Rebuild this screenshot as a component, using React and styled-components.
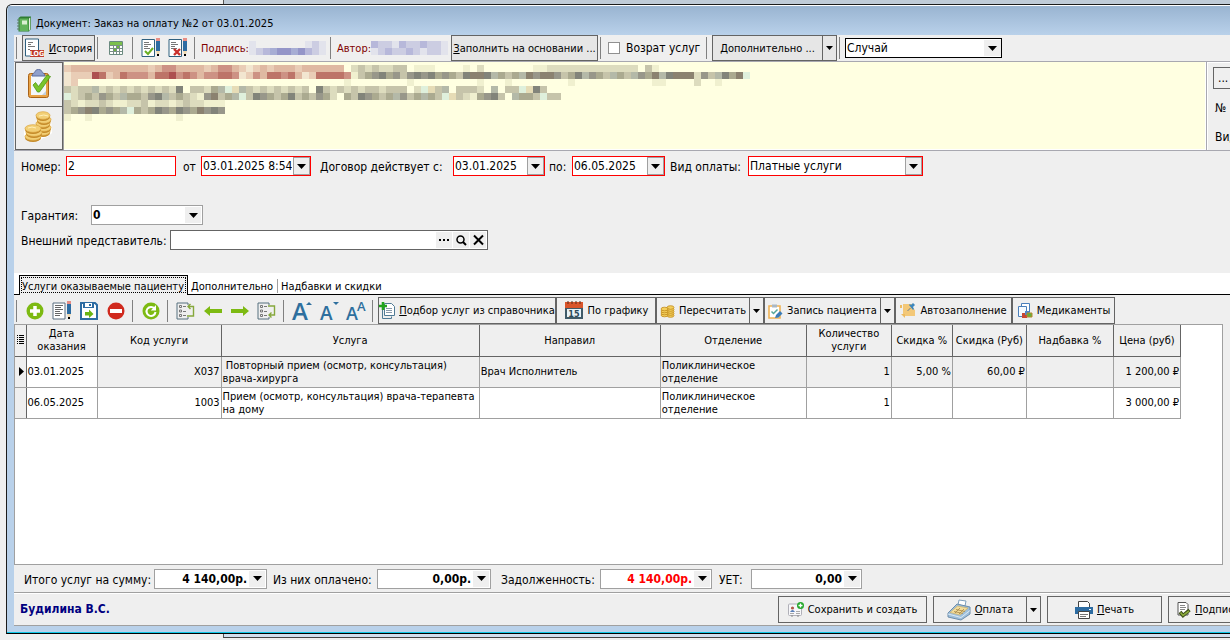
import React from "react";
import styled, { createGlobalStyle, css } from "styled-components";

const line = "#a0a0a0";
const dark = "#646464";

const Global = createGlobalStyle`
  *, *::before, *::after { box-sizing: border-box; }
  body {
    margin: 0;
    background: #efefef;
    color: #000;
    font: 11px/13px "DejaVu Sans Condensed", "Noto Sans", sans-serif;
  }
  button, input, select { font: inherit; color: inherit; margin: 0; border-radius: 0; }
  u { text-underline-offset: 1px; }
`;

/* ---------- window shell ---------- */

const Desktop = styled.div`
  display: flex;
  flex-direction: column;
  min-height: 100vh;
  overflow: hidden;
`;
const BackEdge = styled.div`
  height: 4px;
  margin-left: 223px;
  border-left: 1px solid #555;
  background: ${(p) => (p.$bottom ? "#d3dfee" : "#c0ccd8")};
  ${(p) => p.$bottom && css`border-bottom: 1px solid #444; margin-bottom: 2px;`}
`;
const Window = styled.div`
  flex: 1;
  display: flex;
  flex-direction: column;
  margin: 0 -60px 0 6px;
  border: 1px solid #1c1c1c;
  border-bottom-color: #000;
  border-radius: 6px 6px 0 0;
  background: #b9d1ea;
  box-shadow: inset 0 -1px 0 #10c8e8, inset 0 1px 0 #fff;
  padding: 1px 7px 7px 7px;
  overflow: hidden;
`;
const TitleBar = styled.header`
  display: flex;
  align-items: center;
  gap: 4px;
  height: 29px;
  margin: 0 -6px;
  padding: 6px 0 0 9px;
  background: linear-gradient(#99b4d1, #b9d1ea);
`;
const Title = styled.h1`
  margin: 0;
  font-size: 11px;
  font-weight: 400;
  line-height: 16px;
  white-space: nowrap;
`;
const Client = styled.main`
  flex: 1;
  display: flex;
  flex-direction: column;
  background: #efefef;
  border-bottom: 1px solid ${line};
`;

/* ---------- toolbars ---------- */

const Bar = styled.div`
  display: flex;
  align-items: center;
  height: ${(p) => p.$h}px;
  padding-top: ${(p) => p.$pt || 0}px;
`;
const Sep = styled.span`
  flex: none;
  width: 1px;
  height: 22px;
  margin: 0 5px 0 2px;
  background: #808080;
`;
const IconButton = styled.button`
  flex: none;
  display: flex;
  align-items: center;
  justify-content: center;
  width: 27px;
  height: 26px;
  padding: 0 2px 0 0;
  border: 0;
  background: none;
`;
const PushButton = styled.button`
  flex: none;
  display: flex;
  align-items: center;
  justify-content: ${(p) => p.$justify || "center"};
  gap: 4px;
  width: ${(p) => p.$w}px;
  height: ${(p) => p.$h || 26}px;
  padding: 0 ${(p) => p.$px || 2}px;
  border: 1px solid ${dark};
  background: ${(p) => (p.$raised ? "#e6e6e6" : "#efefef")};
  white-space: nowrap;
`;
const DropButton = styled(PushButton)`
  width: 15px;
  padding: 0;
  margin-left: -1px;
`;
const Signature = styled.div`
  flex: none;
  display: flex;
  align-items: center;
  width: ${(p) => p.$w}px;
  padding-left: 1px;
  color: #800000;
  white-space: nowrap;
`;
const CheckLabel = styled.label`
  flex: none;
  display: flex;
  align-items: center;
  gap: 6px;
  width: 98px;
  padding-left: 2px;
  font-size: 12px;
  white-space: nowrap;
`;
const CheckBox = styled.input`
  appearance: none;
  flex: none;
  width: 12px;
  height: 12px;
  border: 1px solid #909090;
  background: #fff;
`;

/* ---------- fields ---------- */

const Box = styled.span`
  flex: none;
  display: flex;
  align-items: center;
  width: ${(p) => p.$w}px;
  height: 20px;
  border: 1px solid ${(p) => p.$border || line};
  background: #fff;
  overflow: hidden;
`;
const Input = styled.input`
  flex: 1;
  min-width: 0;
  height: 18px;
  padding: 0 ${(p) => (p.$right ? 2 : 1)}px 0 1px;
  border: 0;
  outline: 0;
  background: none;
  font-size: 12px;
  font-weight: ${(p) => (p.$bold ? 700 : 400)};
  text-align: ${(p) => (p.$right ? "right" : "left")};
  color: ${(p) => p.$color || "#000"};
`;
const BoxButton = styled.button`
  flex: none;
  display: flex;
  align-items: center;
  justify-content: center;
  width: ${(p) => (p.$framed ? 17 : 16)}px;
  height: ${(p) => (p.$framed ? 18 : 16)}px;
  margin-right: ${(p) => (p.$framed ? 0 : 1)}px;
  padding: 0;
  border: ${(p) => (p.$framed ? `1px solid ${line}` : 0)};
  background: #efefef;
`;
const SelectWrap = styled(Box)`
  display: grid;
  grid-template-columns: 1fr 17px;
  > * { grid-row: 1; }
  > select { grid-column: 1 / 3; }
  > span { grid-column: 2; }
`;
const Select = styled.select`
  appearance: none;
  height: 18px;
  padding: 0 1px;
  border: 0;
  outline: 0;
  background: none;
  font-size: 12px;
`;
const SelectArrow = styled.span`
  display: flex;
  align-items: center;
  justify-content: center;
  height: ${(p) => (p.$framed ? 18 : 16)}px;
  border: ${(p) => (p.$framed ? `1px solid ${line}` : 0)};
  background: #efefef;
  pointer-events: none;
`;
const Label = styled.label`
  flex: none;
  width: ${(p) => p.$w}px;
  padding: 2px 0 0 ${(p) => p.$pl || 0}px;
  font-size: 12px;
  line-height: 16px;
  white-space: nowrap;
`;

/* ---------- patient panel ---------- */

const Patient = styled.section`
  display: flex;
  height: 90px;
  border-top: 1px solid #a8a8b0;
  border-bottom: 1px solid #a8a8b0;
`;
const SideButtons = styled.div`
  flex: none;
  display: flex;
  flex-direction: column;
  width: 50px;
  padding-left: 1px;
  border-right: 1px solid ${line};
`;
const SideButton = styled.button`
  flex: 1;
  display: flex;
  align-items: center;
  justify-content: center;
  padding: 0;
  border: 1px solid ${dark};
  background: #efefef;
  & + & { margin-top: -1px; }
`;
const Banner = styled.div`
  flex: 1;
  min-width: 0;
  padding-top: 3px;
  border: solid #fff;
  border-width: 0 1px 1px 0;
  background: #ffffe1;
`;
const Extra = styled.div`
  flex: none;
  display: flex;
  flex-direction: column;
  gap: 9px;
  width: 76px;
  padding: 5px 0 0 6px;
  border-left: 1px solid #a8a8b0;
  box-shadow: inset 1px 1px 0 #fff;
  font-size: 12px;
  line-height: 20px;
  > span { padding-left: 2px; }
`;

/* ---------- form, tabs, table ---------- */

const Form = styled.section`
  display: flex;
  flex-direction: column;
  height: 122px;
  padding: 5px 0 0 7px;
`;
const Line = styled.div`
  display: flex;
  align-items: center;
  margin-bottom: ${(p) => p.$mb || 0}px;
`;
const Tabs = styled.nav`
  display: flex;
  align-items: flex-end;
  height: 22px;
  padding-left: 5px;
  background: #fff;
  border-bottom: 1px solid #000;
`;
const Tab = styled.button`
  flex: none;
  height: ${(p) => (p.$active ? 20 : 14)}px;
  width: ${(p) => p.$w}px;
  margin-bottom: ${(p) => (p.$active ? -1 : 1)}px;
  padding: ${(p) => (p.$active ? "2px 2px 0" : "0 3px")};
  border: ${(p) => (p.$active ? "1px solid #000" : 0)};
  border-bottom: 0;
  border-right: ${(p) => (p.$active ? "1px solid #000" : p.$edge ? "1px solid #a0a0a0" : 0)};
  background: ${(p) => (p.$active ? "#efefef" : "#fff")};
  outline: ${(p) => (p.$active ? "1px dotted #000" : 0)};
  outline-offset: -3px;
  text-align: left;
  white-space: nowrap;
`;
const GridArea = styled.section`
  flex: 1;
  margin-right: 59px;
  border: 1px solid ${line};
  background: #fff;
`;
const Table = styled.table`
  table-layout: fixed;
  width: 1166px;
  border-collapse: collapse;
`;
const Th = styled.th`
  height: 31px;
  padding: 0 2px;
  border: 1px solid ${dark};
  border-top: 0;
  background: #efefef;
  font-weight: 400;
  &:first-child { border-left: 0; padding: 0; }
`;
const Td = styled.td`
  height: 31px;
  padding: 0 1px;
  border: 1px solid ${line};
  background: ${(p) => (p.$gray ? "#efefef" : "#fff")};
  text-align: ${(p) => (p.$right ? "right" : "left")};
  white-space: pre-wrap;
  &:first-child { border-left: 0; border-right-color: ${dark}; padding: 0; }
  > svg { display: block; }
`;
const Totals = styled.section`
  display: flex;
  align-items: center;
  height: 28px;
  padding-left: 10px;
  border-bottom: 1px solid ${line};
`;
const Footer = styled.footer`
  display: flex;
  align-items: center;
  gap: 6px;
  height: 32px;
  padding: 0 6px;
  border-top: 1px solid #fff;
`;
const Author = styled.strong`
  flex: 1;
  color: #000080;
  font-size: 12px;
`;
const SplitGroup = styled.span`
  flex: none;
  display: flex;
`;

/* ---------- drawings ---------- */

const Svg = ({ w = 20, h = 20, vb, children }) => (
  <svg width={w} height={h} viewBox={vb || `0 0 ${w} ${h}`} overflow="visible" aria-hidden="true">{children}</svg>
);
const Arrow = ({ small }) =>
  small ? <Svg w={7} h={4}><path d="M0 0h7L3.500 4z" /></Svg> : <Svg w={9} h={5}><path d="M0 0h9L4.500 5z" /></Svg>;

const Book = () => (
  <Svg w={15} h={16}>
    <path d="M1.500 2l2-1.500h10.500v12.500l-2 2.500H1.500z" fill="#2f7d32" />
    <path d="M2.500 2.500h9v12.500h-9z" fill="#62b45c" />
    <path d="M12 2.500l1.300-1v11.500L12 15z" fill="#e6f0e0" />
    <path d="M5 4.500h5v4H5z" fill="#d9efd2" />
    <path d="M0 4h3M0 7h3M0 10h3M0 13h3" stroke="#5b7f60" />
  </Svg>
);
const LogIcon = () => (
  <Svg w={20} h={20}>
    <path d="M.5 1h13v17H.5z" fill="#fff" stroke="#2f607f" />
    <path d="M3 4.500h5M3 6.500h3M3 8.500h7M3 11.500h2" stroke="#777" />
    <path d="M5 12h14v7H5z" fill="#c0392b" />
    <text x="12" y="18" textAnchor="middle" fontSize="7" fontWeight="700" fill="#fff">LOG</text>
  </Svg>
);
const TableIcon = () => (
  <Svg w={14} h={14}>
    <path d="M.5.5h13v13H.5z" fill="#fff" stroke="#6a8a80" />
    <path d="M1 1h12v3H1z" fill="#7cc04c" />
    <path d="M1 4.500h12M1 7.500h12M1 10.500h12M4.500 4v9M7.500 4v9M10.500 4v9" stroke="#7a8f86" />
    <path d="M8 5h2v2H8zM5 8h2v2H5z" fill="#6fba3c" />
  </Svg>
);
const Pencil = ({ x, y = 0 }) => (
  <g transform={`translate(${x} ${y})`}>
    <path d="M0 0h4v3H0z" fill="#e88d85" />
    <path d="M0 3h4v10H0z" fill="#2d6ca2" />
    <path d="M0 13h4l-1 3H1z" fill="#f0d9b0" />
    <path d="M1 16h2v2H1z" />
  </g>
);
const DocMark = ({ bad }) => (
  <Svg>
    <path d="M1 1.500h12.500v17H1z" fill="#fff" stroke="#2f607f" />
    <path d="M3 4.500h5M3 6.500h7M3 8.500h4M3 10.500h6" stroke="#777" />
    {bad ? (
      <path d="M6 11l6 6M12 11l-6 6" stroke="#c9302c" strokeWidth="2.400" />
    ) : (
      <path d="M4 13l3 3 5-6" fill="none" stroke="#6ab023" strokeWidth="2" />
    )}
    <Pencil x={15} />
  </Svg>
);
const DocLines = () => (
  <Svg>
    <path d="M1 2h12v16H1z" fill="#fff" stroke="#5b6f80" />
    <path d="M3 4.500h8M3 6.500h6M3 8.500h8M3 10.500h5M3 12.500h7M3 14.500h5" stroke="#666" />
    <Pencil x={15} />
  </Svg>
);
const Plus = () => (
  <Svg w={18} h={18}>
    <circle cx="9" cy="9" r="8.500" fill="#7dba12" />
    <path d="M9 4v10M4 9h10" stroke="#fff" strokeWidth="3.500" />
  </Svg>
);
const Minus = () => (
  <Svg w={18} h={18}>
    <circle cx="9" cy="9" r="8.500" fill="#d02a1e" />
    <path d="M3 9h12" stroke="#fff" strokeWidth="4" />
  </Svg>
);
const Save = () => (
  <Svg w={18} h={18}>
    <path d="M1 1h14l2 2v14H1z" fill="#fff" stroke="#2d6ca2" strokeWidth="2" />
    <path d="M3 1h11v5H3z" fill="#2d6ca2" />
    <path d="M5 1h7v4H5z" fill="#fff" />
    <path d="M9 2h2v2H9z" fill="#2d6ca2" />
    <path d="M5 10h4V7.500L13.500 12 9 16v-2.500H5z" fill="#6ab512" />
  </Svg>
);
const Refresh = () => (
  <Svg w={18} h={18}>
    <circle cx="9" cy="9" r="8.500" fill="#7dba12" />
    <path d="M12.500 6.500A4.500 4.500 0 1 0 13.500 10" fill="none" stroke="#fff" strokeWidth="2" />
    <path d="M14 3v5.500H8.800z" fill="#fff" />
  </Svg>
);
const ListMove = ({ down }) => (
  <Svg w={19} h={18}>
    <path d="M12 3V1H1v16h11v-2" fill="none" stroke="#57707f" />
    <path d="M3.500 3.500h2v2h-2zM3.500 8h2v2h-2zM3.500 12.500h2v2h-2z" fill="none" stroke="#777" />
    <path d="M7 4.500h3M7 9.500h3M7 13.500h3" stroke="#777" />
    {down ? (
      <path d="M11 4h6.500v9H12M14.500 10.500L12 13l2.500 2.500" fill="none" stroke="#86a83c" strokeWidth="1.400" />
    ) : (
      <path d="M11 14h6.500V4.500H12M14.500 2L12 4.500 14.500 7" fill="none" stroke="#86a83c" strokeWidth="1.400" />
    )}
  </Svg>
);
const BigArrow = ({ right }) => (
  <Svg w={18} h={10}>
    <path d={right ? "M18 5l-6-5v3H0v4h12v3z" : "M0 5l6-5v3h12v4H6v3z"} fill="#7dba12" />
  </Svg>
);
const LetterA = ({ size, x, y }) => (
  <text x={x} y={y} fontFamily="Open Sans, sans-serif" fontSize={size} fontWeight="600" fill="#2e6f9e">A</text>
);
const FontUp = () => (
  <Svg><LetterA size={24} x={0} y={19} /><path d="M14 4l3-3 3 3z" fill="#2e6f9e" /></Svg>
);
const FontDown = () => (
  <Svg><LetterA size={19} x={1} y={19} /><path d="M14 1h6l-3 3z" fill="#2e6f9e" /></Svg>
);
const FontBoth = () => (
  <Svg><LetterA size={18} x={0} y={19} /><LetterA size={13} x={11} y={10} /></Svg>
);
const AddDoc = () => (
  <Svg w={16} h={17}>
    <path d="M5.500 1.500h7l3 3v9h-10z" fill="#fff" stroke="#4f7a95" />
    <path d="M3.500 5v11.500h9v-2" fill="none" stroke="#4f7a95" />
    <path d="M7 6.500h6M7 8.500h6M7 10.500h6" stroke="#89a" />
    <path d="M4 0v8M0 4h8" stroke="#22a31c" strokeWidth="2.600" />
  </Svg>
);
const Calendar = () => (
  <Svg w={20} h={19}>
    <path d="M1 1h18v17H1z" fill="#3f5a68" />
    <path d="M1 1h18v6H1z" fill="#d9552b" />
    <path d="M4 0v3M8 0v3M12 0v3M16 0v3" stroke="#5c2a18" />
    <path d="M3 8h14v8H3z" fill="#e9f3f8" />
    <text x="10" y="15.500" textAnchor="middle" fontSize="9" fontWeight="700" fill="#2c4a5a">15</text>
  </Svg>
);
const CoinStack = ({ x, y, n }) => (
  <g>
    {Array.from({ length: n }, (_, i) => (
      <ellipse key={i} cx={x} cy={y - i * 2} rx="3.500" ry="1.800" fill="#f4cf5c" stroke="#c08a1c" strokeWidth=".8" />
    ))}
  </g>
);
const SmallCoins = () => (
  <Svg w={15} h={14}>
    <CoinStack x={10.500} y={11.500} n={5} />
    <CoinStack x={4.500} y={11} n={4} />
  </Svg>
);
const ClipPen = () => (
  <Svg w={15} h={16}>
    <path d="M1 3h11v12H1z" fill="#fff" stroke="#efb356" strokeWidth="1.600" />
    <path d="M4 1.500h5v3H4z" fill="#aab8c4" />
    <path d="M3.500 8.500l2 2 4-4" fill="none" stroke="#55a69a" strokeWidth="1.500" />
    <path d="M7 15l1-3 4-4 2.500 2.500-4 4z" fill="#3b7cb8" />
  </Svg>
);
const Notes = () => (
  <Svg w={16} h={16}>
    <path d="M3 1h9v3l3 3v6H3z" fill="#f3c878" />
    <path d="M0 2h2v3H0zM1 11h4v4z" fill="#edbb60" />
    <path d="M7.500 8l3-3" stroke="#6b7f90" />
    <path d="M9 2l1-1 1 1 2-2 2 2-2 2 1 2-1 1z" fill="#3c86bd" />
  </Svg>
);
const Meds = () => (
  <Svg w={16} h={16}>
    <path d="M4.500.5h8v9h-8z" fill="#fff" stroke="#4a7fbb" />
    <path d="M1.500 3.500h8v10h-8z" fill="#f6fbff" stroke="#4a7fbb" />
    <path d="M5 10h5v5H5z" fill="#c74634" />
    <path d="M8 8h4v4H8z" fill="#4f86c8" />
    <path d="M10 10h5v4h-5z" fill="#63b13a" stroke="#b8862c" />
  </Svg>
);
const ClipCheck = () => (
  <Svg w={24} h={30}>
    <rect x="1.500" y="4.500" width="20" height="24" rx="2" fill="#e9a347" stroke="#a86218" />
    <path d="M4 7h15v19H4z" fill="#f3f7fb" />
    <path d="M15 26l4-4v4z" fill="#c3d0de" />
    <path d="M5 7c0-3 3-3 3-4s1-2.500 3.500-2.500S15 2 15 3s3 1 3 4z" fill="#8fa0cc" stroke="#5b6ca0" />
    <path d="M6 16l2.500-2.500 3 4L20 6l3.500 1.500L12.500 23h-2z" fill="#7ac52c" stroke="#4f9416" strokeWidth=".8" />
  </Svg>
);
const Coins = () => {
  const stack = (x, y, n, rx) =>
    Array.from({ length: n }, (_, i) => (
      <g key={`${x}-${i}`}>
        <ellipse cx={x + (i % 2)} cy={y - i * 4} rx={rx} ry="4" fill="#c48a2a" />
        <ellipse cx={x + (i % 2)} cy={y - i * 4 - 1.500} rx={rx} ry="3.800" fill="#f2cf76" stroke="#dba845" strokeWidth=".7" />
      </g>
    ));
  return (
    <Svg w={30} h={30}>
      <path d="M12 4q7-6 15 1l1 15q-5 5-9 5-5 6-13 3-7-2-6-9 0-6 12-7z" fill="#fff" />
      {stack(19, 20, 5, 7)}
      {stack(9, 25, 3, 8)}
      <path d="M15 3q5-2 9 0M4 15q4-2 8 0" stroke="#fff0b8" fill="none" />
    </Svg>
  );
};
const SaveNew = () => (
  <Svg w={16} h={15}>
    <rect x=".5" y="2" width="13" height="11.500" rx="1" fill="#f7f7fa" stroke="#b0b0b8" />
    <circle cx="4.500" cy="6" r="1.600" fill="#b05a4a" />
    <path d="M2 10q2.500-4 5 0z" fill="#5a7fb8" />
    <path d="M8 9.500h4M8 11.500h4M2 11.500h4" stroke="#aaa" />
    <path d="M3 13.500h2v1H3zM9 13.500h2v1H9z" fill="#888" />
    <circle cx="12.500" cy="3.500" r="3.500" fill="#23a82a" />
    <path d="M12.500 1.500v4M10.500 3.500h4" stroke="#fff" strokeWidth="1.300" />
  </Svg>
);
const Register = () => (
  <Svg w={24} h={20}>
    <path d="M11 5l1-5 7 1-1 5z" fill="#fff" stroke="#7fa0bd" />
    <path d="M1 13l9-9 13 3v7l-9 6-13-3z" fill="#9fc0dc" stroke="#6d8dab" />
    <path d="M3 12.500L10.500 6 21 8l-8 7z" fill="#f3dc9a" stroke="#c9a95c" strokeWidth=".6" />
    <path d="M7 11.500l9 2M9 9.500l9 2M8 13l5-5M12 14l5-5" stroke="#a4874a" strokeWidth=".8" />
    <path d="M1 14l13 3.500 9-7" fill="none" stroke="#dbe9f5" />
  </Svg>
);
const Printer = () => (
  <Svg w={18} h={18}>
    <path d="M3.500.5h9l2 2v5h-11z" fill="#fff" stroke="#444" />
    <path d="M0 6h18v7H0z" fill="#2d6ca2" />
    <path d="M14 8h2v1h-2z" fill="#fff" />
    <path d="M3.500 10.500h11v7h-11z" fill="#fff" stroke="#444" />
    <path d="M5 13.500h8M5 15.500h6" stroke="#777" />
  </Svg>
);
const SignDoc = () => (
  <Svg w={14} h={16}>
    <path d="M1 .5h8l2 2V13H1z" fill="#fff" stroke="#555" />
    <path d="M3 3.500h5M3 5.500h6M3 7.500h5" stroke="#888" />
    <path d="M3 10l3 3.500L12.500 8" fill="none" stroke="#3a4a18" strokeWidth="3.600" />
    <path d="M3.500 10.500l2.500 3L12 9" fill="none" stroke="#8cab3c" strokeWidth="1.600" />
  </Svg>
);
const Lines = () => (
  <Svg w={7} h={9}>
    <path d="M0 .5h1M2 .5h5M0 2.500h1M2 2.500h5M0 4.500h1M2 4.500h5M0 6.500h1M2 6.500h5M0 8.500h1M2 8.500h5" stroke="#000" />
  </Svg>
);

/* Hidden personal data is drawn as coarse colour cells, one letter per cell. */
const tones = {
  a: "#f2e6d0", b: "#dfb9a2", c: "#cd9284", d: "#bd7468", e: "#ad5050", f: "#e9cdb6",
  h: "#f0f0cf", i: "#dddcbe", j: "#c6c4aa", k: "#abaa90", l: "#98978a", m: "#82847a",
  n: "#8b8270", o: "#b4b9a8", p: "#e6dcb6", q: "#dff0dc",
  s: "#e2e3ec", t: "#cccde2", u: "#b7b8da", v: "#9495c8", w: "#a7add4",
};
const Mosaic = ({ rows, cell = 7 }) => {
  const w = Math.max(...rows.map((r) => r.length)) * cell;
  const h = rows.length * cell;
  return (
    <svg width={w} height={h} viewBox={`0 0 ${w} ${h}`} shapeRendering="crispEdges" display="block" aria-hidden="true">
      {rows.flatMap((r, y) =>
        [...r].map((c, x) =>
          tones[c] ? <rect key={`${x}-${y}`} x={x * cell} y={y * cell} width={cell} height={cell} fill={tones[c]} /> : null
        )
      )}
    </svg>
  );
};
const patientRows = [
  "fbbbbbbbbbbbfbccbbbbfbccbfafbfbbbfbbbbbb.ijijiijj.hhh....h.i.......hhiiiiiiiiiiiii.jh",
  "afffedfbdcccbddecdcbccddcafcbddcdbafddddchjklmkljlmlmklkjmnnmokjkonlnnljkmolkjokjolknomnnniljomknq",
  "af......................................h........h.........h...h........h...........hh....i..h....",
  "jijjoijijijijijim.jjikoqpojijijijij.mjijijijjijjj.iqpjo.jjji.o.jjqpmj",
  "qijkjlkjokkjlmojkjihlnjkoqjmlkjkmjkjlki.kjmlkjkoljkokjqpjihklmj.okkjqjj",
  "jihiijihhiijhiihijiihhh",
  "jklnmklkoqkjkmlkmlknlml",
  "h..h............h......",
];
const signRows = ["s.......sts", "stuwvvwvuts"];
const authorRows = ["uttsuttutts", "stuttutstts"];

/* ---------- data ---------- */

const cols = [11, 71, 124, 258, 181, 146, 85, 61, 74, 87, 67];
const heads = ["Дата оказания", "Код услуги", "Услуга", "Направил", "Отделение", "Количество услуги", "Скидка %", "Скидка (Руб)", "Надбавка %", "Цена (руб)"];
const rows = [
  ["03.01.2025", "X037", " Повторный прием (осмотр, консультация) врача-хирурга", "Врач Исполнитель", "Поликлиническое отделение", "1", "5,00 %", "60,00 ₽", "", "1 200,00 ₽"],
  ["06.05.2025", "1003", "Прием (осмотр, консультация) врача-терапевта на дому", "", "Поликлиническое отделение", "1", "", "", "", "3 000,00 ₽"],
];
const rightCols = [1, 5, 6, 7, 8, 9];
const totals = [
  { id: "sum", label: "Итого услуг на сумму:", lw: 130, w: 113, value: "4 140,00р." },
  { id: "paid", label: "Из них оплачено:", lw: 110, pl: 6, w: 114, value: "0,00р." },
  { id: "debt", label: "Задолженность:", lw: 109, pl: 10, w: 112, value: "4 140,00р.", color: "#f00" },
  { id: "uet", label: "УЕТ:", lw: 39, pl: 7, w: 111, value: "0,00" },
];

const Combo = ({ id, w, value, border, framed, ...input }) => (
  <Box $w={w} $border={border}>
    <Input id={id} defaultValue={value} {...input} />
    <BoxButton $framed={framed} aria-label="Открыть список"><Arrow /></BoxButton>
  </Box>
);

export default function App() {
  return (
    <>
      <Global />
      <Desktop>
        <BackEdge />
        <Window>
          <TitleBar>
            <Book />
            <Title>Документ: Заказ на оплату №2 от 03.01.2025</Title>
          </TitleBar>
          <Client>
            <Bar $h={26}>
              <Sep />
              <PushButton $w={73} $raised><LogIcon /><span><u>И</u>стория</span></PushButton>
              <Sep />
              <IconButton aria-label="Таблица"><TableIcon /></IconButton>
              <Sep />
              <IconButton aria-label="Подписать"><DocMark /></IconButton>
              <IconButton aria-label="Снять подпись"><DocMark bad /></IconButton>
              <Sep />
              <Signature $w={128}>Подпись:<Mosaic rows={signRows} /></Signature>
              <Sep />
              <Signature $w={115}>Автор:<Mosaic rows={authorRows} /></Signature>
              <PushButton $w={147} $raised><span><u>З</u>аполнить на основании ...</span></PushButton>
              <Sep />
              <CheckLabel><CheckBox type="checkbox" />Возрат услуг</CheckLabel>
              <Sep />
              <SplitGroup>
                <PushButton $w={111} $raised><span><u>Д</u>ополнительно ...</span></PushButton>
                <DropButton $raised aria-label="Дополнительно: меню"><Arrow small /></DropButton>
              </SplitGroup>
              <Sep />
              <SelectWrap $w={157} $border="#000">
                <Select aria-label="Случай"><option>Случай</option></Select>
                <SelectArrow><Arrow /></SelectArrow>
              </SelectWrap>
            </Bar>

            <Patient>
              <SideButtons>
                <SideButton aria-label="Карта пациента"><ClipCheck /></SideButton>
                <SideButton aria-label="Оплаты"><Coins /></SideButton>
              </SideButtons>
              <Banner><Mosaic rows={patientRows} /></Banner>
              <Extra>
                <PushButton $w={30} $h={22} $px={4} $justify="flex-start">...</PushButton>
                <span>№</span>
                <span>Вид</span>
              </Extra>
            </Patient>

            <Form>
              <Line $mb={29}>
                <Label $w={45} htmlFor="num">Номер:</Label>
                <Box $w={110} $border="#f00"><Input id="num" defaultValue="2" /></Box>
                <Label $w={25} $pl={7} htmlFor="from">от</Label>
                <Combo id="from" w={110} value="03.01.2025 8:54:12" border="#f00" framed />
                <Label $w={142} $pl={9} htmlFor="valid">Договор действует с:</Label>
                <Combo id="valid" w={92} value="03.01.2025" border="#f00" framed />
                <Label $w={27} $pl={4} htmlFor="till">по:</Label>
                <Combo id="till" w={93} value="06.05.2025" border="#f00" framed />
                <Label $w={83} $pl={5} htmlFor="kind">Вид оплаты:</Label>
                <SelectWrap $w={175} $border="#f00">
                  <Select id="kind"><option>Платные услуги</option></Select>
                  <SelectArrow $framed><Arrow /></SelectArrow>
                </SelectWrap>
              </Line>
              <Line $mb={5}>
                <Label $w={70} htmlFor="warranty">Гарантия:</Label>
                <Combo id="warranty" w={112} value="0" $bold />
              </Line>
              <Line>
                <Label $w={149} htmlFor="agent">Внешний представитель:</Label>
                <Box $w={318} $border={dark}>
                  <Input id="agent" />
                  <BoxButton aria-label="Выбрать"><Svg w={11} h={2}><path d="M0 0h2v2H0zM4 0h2v2H4zM8 0h2v2H8z" /></Svg></BoxButton>
                  <BoxButton aria-label="Найти"><Svg w={11} h={11}><circle cx="4.500" cy="4.500" r="3.500" fill="none" stroke="#000" strokeWidth="1.500" /><path d="M7 7l3 3" stroke="#000" strokeWidth="2" /></Svg></BoxButton>
                  <BoxButton aria-label="Очистить"><Svg w={11} h={10}><path d="M1 .5l9 9M10 .5l-9 9" stroke="#000" strokeWidth="2" /></Svg></BoxButton>
                </Box>
              </Line>
            </Form>

            <Tabs>
              <Tab $w={169} $active>Услуги оказываемые пациенту</Tab>
              <Tab $w={90} $edge>Дополнительно</Tab>
              <Tab $w={110}>Надбавки и скидки</Tab>
            </Tabs>

            <Bar $h={29} $pt={2}>
              <Sep />
              <IconButton aria-label="Добавить"><Plus /></IconButton>
              <IconButton aria-label="Изменить"><DocLines /></IconButton>
              <IconButton aria-label="Сохранить"><Save /></IconButton>
              <IconButton aria-label="Удалить"><Minus /></IconButton>
              <Sep />
              <IconButton aria-label="Обновить"><Refresh /></IconButton>
              <Sep />
              <IconButton aria-label="В начало"><ListMove /></IconButton>
              <IconButton aria-label="Назад"><BigArrow /></IconButton>
              <IconButton aria-label="Вперед"><BigArrow right /></IconButton>
              <IconButton aria-label="В конец"><ListMove down /></IconButton>
              <Sep />
              <IconButton aria-label="Крупнее"><FontUp /></IconButton>
              <IconButton aria-label="Мельче"><FontDown /></IconButton>
              <IconButton aria-label="Шрифт"><FontBoth /></IconButton>
              <Sep />
              <PushButton $w={178} $h={27}><AddDoc /><span><u>П</u>одбор услуг из справочника</span></PushButton>
              <PushButton $w={100} $h={27}><Calendar />По графику</PushButton>
              <SplitGroup>
                <PushButton $w={94} $h={27}><SmallCoins />Пересчитать</PushButton>
                <DropButton $h={27} aria-label="Пересчитать: меню"><Arrow small /></DropButton>
              </SplitGroup>
              <SplitGroup>
                <PushButton $w={117} $h={27}><ClipPen />Запись пациента</PushButton>
                <DropButton $h={27} aria-label="Запись пациента: меню"><Arrow small /></DropButton>
              </SplitGroup>
              <PushButton $w={117} $h={27}><Notes />Автозаполнение</PushButton>
              <PushButton $w={103} $h={27}><Meds />Медикаменты</PushButton>
            </Bar>

            <GridArea>
              <Table>
                <colgroup>{cols.map((w, i) => <col key={i} width={w} />)}</colgroup>
                <thead>
                  <tr>
                    <Th><Lines /></Th>
                    {heads.map((h) => <Th key={h}>{h}</Th>)}
                  </tr>
                </thead>
                <tbody>
                  {rows.map((r, n) => (
                    <tr key={n}>
                      <Td $gray>{n === 0 && <Svg w={10} h={9}><path d="M4 0l5 4.500L4 9z" /></Svg>}</Td>
                      {r.map((c, i) => (
                        <Td key={i} $right={rightCols.includes(i)} $gray={n === 0 && i > 0}>{c}</Td>
                      ))}
                    </tr>
                  ))}
                </tbody>
              </Table>
            </GridArea>

            <Totals>
              {totals.map((t) => (
                <React.Fragment key={t.id}>
                  <Label $w={t.lw} $pl={t.pl} htmlFor={t.id}>{t.label}</Label>
                  <Combo id={t.id} w={t.w} value={t.value} $bold $right $color={t.color} />
                </React.Fragment>
              ))}
            </Totals>

            <Footer>
              <Author>Будилина В.С.</Author>
              <PushButton $w={149} $h={27}><SaveNew />Сохранить и создать</PushButton>
              <SplitGroup>
                <PushButton $w={94} $h={27}><Register /><span><u>О</u>плата</span></PushButton>
                <DropButton $h={27} aria-label="Оплата: меню"><Arrow small /></DropButton>
              </SplitGroup>
              <PushButton $w={115} $h={27}><Printer /><span><u>П</u>ечать</span></PushButton>
              <PushButton $w={108} $h={27} $px={8} $justify="flex-start"><SignDoc /><span><u>П</u>одписать</span></PushButton>
            </Footer>
          </Client>
        </Window>
        <BackEdge $bottom />
      </Desktop>
    </>
  );
}
